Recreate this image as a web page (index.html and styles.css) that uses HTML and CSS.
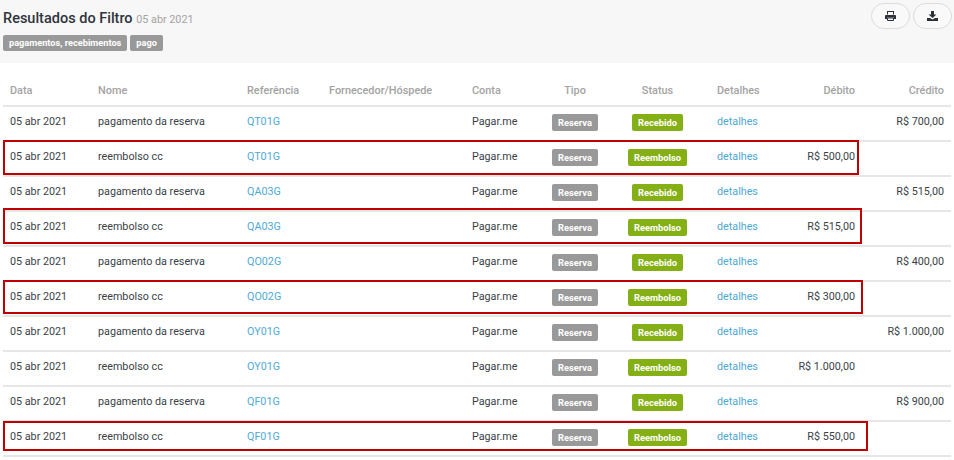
FILE: index.html
```html
<!DOCTYPE html>
<html lang="pt-BR">
<head>
<meta charset="utf-8">
<title>Resultados do Filtro</title>
<link rel="stylesheet" href="styles.css">
</head>
<body>
<header class="top">
  <div class="top-text">
    <h1 class="title">Resultados do Filtro <small class="title-date">05 abr 2021</small></h1>
    <div class="tags"><span class="tag">pagamentos, recebimentos</span><span class="tag">pago</span></div>
  </div>
  <div class="actions">
    <button class="round" aria-label="Imprimir">
      <svg width="11" height="10" viewBox="0 0 11 10"><path fill="#2b2f36" d="M2 0h7v3.500H8V1H3v2.500H2zM1 4h9a1 1 0 0 1 1 1v3H9V6.500H2V8H0V5a1 1 0 0 1 1-1z"/><path fill="none" stroke="#2b2f36" d="M2.500 7h6v2.500h-6z"/></svg>
    </button>
    <button class="round" aria-label="Baixar">
      <svg width="11" height="10" viewBox="0 0 11 10"><path fill="#2b2f36" d="M4 0h3v3.500h2.500L5.500 7 1.500 3.500H4zM0 7h3l2.500 1.500L8 7h3v3H0z"/></svg>
    </button>
  </div>
</header>
<main class="results">
<table class="grid">
  <colgroup><col class="c-data"><col class="c-nome"><col class="c-ref"><col class="c-forn"><col class="c-conta"><col class="c-tipo"><col class="c-status"><col class="c-det"><col class="c-deb"><col class="c-cred"></colgroup>
  <thead><tr><th>Data</th><th>Nome</th><th>Referência</th><th>Fornecedor/Hóspede</th><th>Conta</th><th class="mid">Tipo</th><th class="mid">Status</th><th>Detalhes</th><th class="num">Débito</th><th class="num">Crédito</th></tr></thead>
  <tbody>
    <tr><td>05 abr 2021</td><td>pagamento da reserva</td><td><a href="#">QT01G</a></td><td></td><td>Pagar.me</td><td class="mid"><span class="badge grey">Reserva</span></td><td class="mid"><span class="badge green">Recebido</span></td><td><a href="#">detalhes</a></td><td class="num"></td><td class="num">R$ 700,00</td></tr>
    <tr><td>05 abr 2021</td><td>reembolso cc</td><td><a href="#">QT01G</a></td><td></td><td>Pagar.me</td><td class="mid"><span class="badge grey">Reserva</span></td><td class="mid"><span class="badge green">Reembolso</span></td><td><a href="#">detalhes</a></td><td class="num">R$ 500,00</td><td class="num"></td></tr>
    <tr><td>05 abr 2021</td><td>pagamento da reserva</td><td><a href="#">QA03G</a></td><td></td><td>Pagar.me</td><td class="mid"><span class="badge grey">Reserva</span></td><td class="mid"><span class="badge green">Recebido</span></td><td><a href="#">detalhes</a></td><td class="num"></td><td class="num">R$ 515,00</td></tr>
    <tr><td>05 abr 2021</td><td>reembolso cc</td><td><a href="#">QA03G</a></td><td></td><td>Pagar.me</td><td class="mid"><span class="badge grey">Reserva</span></td><td class="mid"><span class="badge green">Reembolso</span></td><td><a href="#">detalhes</a></td><td class="num">R$ 515,00</td><td class="num"></td></tr>
    <tr><td>05 abr 2021</td><td>pagamento da reserva</td><td><a href="#">QO02G</a></td><td></td><td>Pagar.me</td><td class="mid"><span class="badge grey">Reserva</span></td><td class="mid"><span class="badge green">Recebido</span></td><td><a href="#">detalhes</a></td><td class="num"></td><td class="num">R$ 400,00</td></tr>
    <tr><td>05 abr 2021</td><td>reembolso cc</td><td><a href="#">QO02G</a></td><td></td><td>Pagar.me</td><td class="mid"><span class="badge grey">Reserva</span></td><td class="mid"><span class="badge green">Reembolso</span></td><td><a href="#">detalhes</a></td><td class="num">R$ 300,00</td><td class="num"></td></tr>
    <tr><td>05 abr 2021</td><td>pagamento da reserva</td><td><a href="#">OY01G</a></td><td></td><td>Pagar.me</td><td class="mid"><span class="badge grey">Reserva</span></td><td class="mid"><span class="badge green">Recebido</span></td><td><a href="#">detalhes</a></td><td class="num"></td><td class="num">R$ 1.000,00</td></tr>
    <tr><td>05 abr 2021</td><td>reembolso cc</td><td><a href="#">OY01G</a></td><td></td><td>Pagar.me</td><td class="mid"><span class="badge grey">Reserva</span></td><td class="mid"><span class="badge green">Reembolso</span></td><td><a href="#">detalhes</a></td><td class="num">R$ 1.000,00</td><td class="num"></td></tr>
    <tr><td>05 abr 2021</td><td>pagamento da reserva</td><td><a href="#">QF01G</a></td><td></td><td>Pagar.me</td><td class="mid"><span class="badge grey">Reserva</span></td><td class="mid"><span class="badge green">Recebido</span></td><td><a href="#">detalhes</a></td><td class="num"></td><td class="num">R$ 900,00</td></tr>
    <tr><td>05 abr 2021</td><td>reembolso cc</td><td><a href="#">QF01G</a></td><td></td><td>Pagar.me</td><td class="mid"><span class="badge grey">Reserva</span></td><td class="mid"><span class="badge green">Reembolso</span></td><td><a href="#">detalhes</a></td><td class="num">R$ 550,00</td><td class="num"></td></tr>
  </tbody>
</table>
<div class="mark mark-a"></div>
<div class="mark mark-b"></div>
<div class="mark mark-c"></div>
<div class="mark mark-d"></div>
</main>
</body>
</html>
```
FILE: styles.css
```css
* { box-sizing: border-box; }
html, body { margin: 0; padding: 0; }
body { width: 954px; height: 460px; overflow: hidden; background: #fff; font-family: Roboto, sans-serif; font-size: 10.750px; color: #3a3f47; }
.top { height: 63px; background: #f7f7f7; padding: 3px 2px 0 3px; display: flex; justify-content: space-between; }
.title { margin: 6px 0 0; font-size: 14.500px; line-height: 20px; font-weight: 500; color: #2f343b; }
.title-date { font-size: 10.800px; font-weight: 400; color: #a3a3a3; }
.tags { display: flex; gap: 3px; margin-top: 5px; }
.tag { height: 16px; padding: 0 6px; border-radius: 2px; background: #999; color: #fff; font-size: 9.200px; font-weight: 700; line-height: 16px; }
.actions { display: flex; gap: 3px; }
.round { width: 39px; height: 26px; padding: 0; border: 1.500px solid #dcdcdc; border-radius: 13px; background: #f9f9f9; display: flex; align-items: center; justify-content: center; }
.results { position: relative; padding: 8px 3px 0; }
.grid { width: 948px; table-layout: fixed; border-collapse: collapse; }
.c-data { width: 88px; } .c-nome { width: 149px; } .c-ref { width: 82px; } .c-forn { width: 143px; } .c-conta { width: 80px; }
.c-tipo { width: 60px; } .c-status { width: 105px; } .c-det { width: 75px; } .c-deb { width: 77px; } .c-cred { width: 89px; }
th { height: 35px; padding: 13px 7px 0; font-size: 10.900px; line-height: 13px; font-weight: 500; color: #a3a3a3; text-align: left; vertical-align: top; border-bottom: 2px solid #e6e6e6; }
td { height: 35px; padding: 8px 7px 0; line-height: 13px; vertical-align: top; border-bottom: 2px solid #e6e6e6; }
th.mid, td.mid { text-align: center; }
th.num, td.num { text-align: right; }
a { color: #4fa9d6; text-decoration: none; }
.badge { display: block; width: fit-content; margin: -1px auto 0; height: 17px; padding: 0 6px; border-radius: 2px; color: #fff; font-size: 9.300px; font-weight: 700; line-height: 17px; }
.grey { background: #999; }
.green { background: #85b015; }
.mark { position: absolute; left: 3px; border: 2px solid #c00000; }
.mark-a { top: 77px; width: 856px; height: 35px; }
.mark-b { top: 145px; width: 859px; height: 36px; }
.mark-c { top: 217px; width: 860px; height: 34px; }
.mark-d { top: 358px; width: 865px; height: 30px; }
```
